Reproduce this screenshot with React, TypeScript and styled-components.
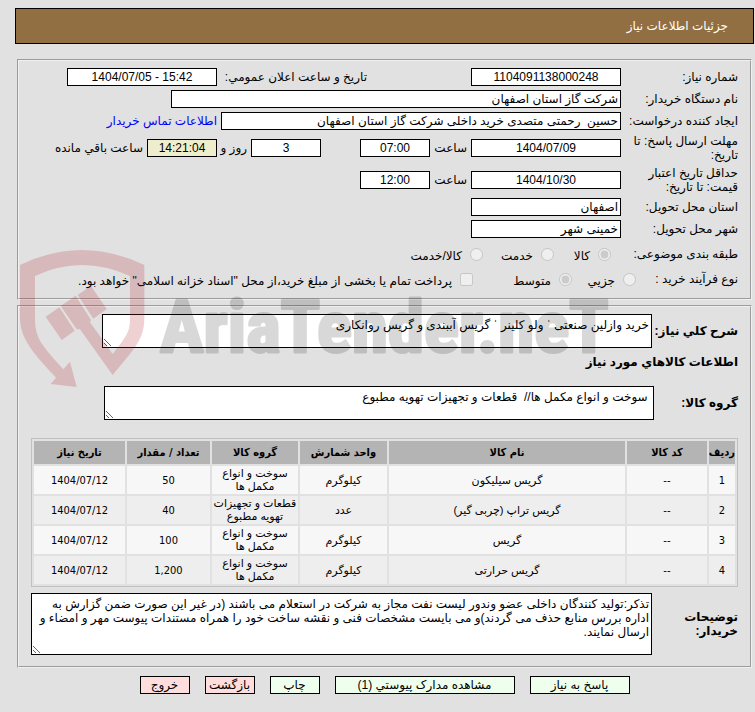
import React from "react";
import styled, { createGlobalStyle, css } from "styled-components";

const GlobalStyle = createGlobalStyle`
  *, *::before, *::after { box-sizing: border-box; }
  body {
    margin: 0;
    background: #e1e1e1;
    color: #000;
    font: 12px/14px "Liberation Sans", "DejaVu Sans", sans-serif;
  }
  input, textarea, button { font: inherit; color: inherit; }
`;

const Page = styled.main`
  position: relative;
  padding: 8px 1px 18px 15px;
`;

const TitleBar = styled.header`
  display: flex;
  align-items: center;
  height: 36px;
  padding: 0 25px;
  border: 1px solid #000;
  background: #916f42;
`;

const Title = styled.h1`
  margin: 0;
  color: #fff;
  font-size: 12px;
  font-weight: normal;
`;

const Panels = styled.div`
  display: flex;
  flex-direction: column;
  gap: 5px;
  padding: 15px 2px 8px;
`;

const Panel = styled.fieldset<{ $pad: string }>`
  min-width: 0;
  margin: 0;
  padding: ${(p) => p.$pad};
  border: 2px groove #f0f0f0;
`;

const Row = styled.div<{ $height?: number }>`
  display: flex;
  align-items: center;
  gap: 4px;
  min-height: ${(p) => p.$height ?? 22}px;
`;

const captionStyle = css<{ $width?: number }>`
  flex: none;
  width: ${(p) => (p.$width ? `${p.$width}px` : "auto")};
`;

const Caption = styled.label<{ $width?: number; $nowrap?: boolean }>`
  ${captionStyle}
  white-space: ${(p) => (p.$nowrap ? "nowrap" : "normal")};
`;

const GroupCaption = styled.span<{ $width?: number }>`
  ${captionStyle}
`;

const Cluster = styled.div<{ $width: number }>`
  display: flex;
  align-items: center;
  gap: 4px;
  flex: none;
  width: ${(p) => p.$width}px;
`;

const Field = styled.input<{ $width: number; $center?: boolean; $accent?: boolean }>`
  width: ${(p) => p.$width}px;
  height: 18px;
  padding: 0 2px;
  border: 1px solid #000;
  border-radius: 0;
  background: ${(p) => (p.$accent ? "#eeeecc" : "#fff")};
  text-align: ${(p) => (p.$center ? "center" : "start")};
`;

const TextLink = styled.a`
  color: #0000ff;
  text-decoration: none;
`;

const Choice = styled.label<{ $width?: number }>`
  display: flex;
  align-items: center;
  gap: 8px;
  flex: none;
  width: ${(p) => (p.$width ? `${p.$width}px` : "auto")};

  input {
    flex: none;
    width: 13px;
    height: 13px;
    margin: 0;
  }

  span {
    padding-top: 3px;
  }
`;

const StrongCaption = styled.label<{ $width: number }>`
  flex: none;
  width: ${(p) => p.$width}px;
  font-weight: bold;
`;

const SectionTitle = styled.h2`
  margin: 7px 0 17px;
  font-size: 12px;
  line-height: 14px;
  font-weight: bold;
`;

const Area = styled.textarea<{ $width: number; $height: number }>`
  display: block;
  width: ${(p) => p.$width}px;
  height: ${(p) => p.$height}px;
  margin: 0;
  padding: 3px 2px;
  border: 1px solid #000;
  border-radius: 0;
  background: #fff;
  overflow: hidden;
`;

const WideArea = styled(Area)`
  flex: 1;
  width: auto;
  min-width: 0;
`;

const AreaRow = styled.div`
  display: flex;
  align-items: center;
`;

const ItemsTable = styled.table`
  width: 100%;
  margin: 18px 0 6px;
  table-layout: fixed;
  border: 1px solid #c0c0c0;
  border-spacing: 2px;
  font-size: 11px;
  line-height: 13px;
  text-align: center;

  th {
    height: 23px;
    padding: 0;
    background: #b4b4b4;
    font-family: "DejaVu Sans Condensed", "DejaVu Sans", sans-serif;
    white-space: nowrap;
  }

  td {
    height: 28px;
    padding: 0;
    background: #f7f7f7;
  }

  tbody tr:nth-child(even) td {
    background: #eee;
  }
`;

const NumberCell = styled.td`
  font-family: "DejaVu Sans Condensed", "DejaVu Sans", sans-serif;
`;

const Col = styled.col<{ $width?: number }>`
  width: ${(p) => (p.$width ? `${p.$width}px` : "auto")};
`;

const Actions = styled.div`
  display: flex;
  justify-content: center;
  gap: 15px;
`;

const ActionButton = styled.button<{ $width: number; $danger?: boolean }>`
  width: ${(p) => p.$width}px;
  height: 18px;
  padding: 0;
  border: 1px solid #000;
  border-radius: 0;
  background: ${(p) => (p.$danger ? "#ffdddd" : "#eeffee")};
  white-space: nowrap;
  cursor: pointer;
`;

const Watermark = styled.svg`
  position: absolute;
  top: 240px;
  left: 10px;
  width: 600px;
  height: 155px;
  direction: ltr;
  pointer-events: none;

  text {
    font: bold 219px "Roboto Condensed", "DejaVu Sans Condensed", sans-serif;
    stroke: #000;
    stroke-width: 9px;
    stroke-linejoin: round;
  }
`;

const items = [
  { name: "گریس سیلیکون", unit: "کیلوگرم", group: "سوخت و انواع مکمل ها", qty: "50" },
  { name: "گریس تراپ (چربی گیر)", unit: "عدد", group: "قطعات و تجهیزات تهویه مطبوع", qty: "40" },
  { name: "گریس", unit: "کیلوگرم", group: "سوخت و انواع مکمل ها", qty: "100" },
  { name: "گریس حرارتی", unit: "کیلوگرم", group: "سوخت و انواع مکمل ها", qty: "1,200" },
];

const headings = ["ردیف", "کد کالا", "نام کالا", "واحد شمارش", "گروه کالا", "تعداد / مقدار", "تاریخ نیاز"];
const columnWidths = [26, 80, undefined, 87, 86, 83, 91];

function GeneralPanel() {
  return (
    <Panel $pad="5px 12px 8px">
      <Row>
        <Caption $width={113} htmlFor="number">شماره نیاز:</Caption>
        <Cluster $width={250}>
          <Field id="number" $width={150} $center readOnly value="1104091138000248" />
        </Cluster>
        <Caption $width={146} htmlFor="announced">تاریخ و ساعت اعلان عمومي:</Caption>
        <Field id="announced" dir="ltr" $width={150} $center readOnly value="1404/07/05 - 15:42" />
      </Row>
      <Row>
        <Caption $width={113} htmlFor="buyer">نام دستگاه خریدار:</Caption>
        <Field id="buyer" $width={450} readOnly value="شرکت گاز استان اصفهان" />
      </Row>
      <Row>
        <Caption $width={113} htmlFor="creator">ایجاد کننده درخواست:</Caption>
        <Field
          id="creator"
          $width={400}
          readOnly
          value="حسین  رحمتی متصدی خرید داخلی شرکت گاز استان اصفهان"
        />
        <TextLink href="#contact">اطلاعات تماس خریدار</TextLink>
      </Row>
      <Row $height={32}>
        <Caption $width={113} htmlFor="deadline">مهلت ارسال پاسخ: تا تاریخ:</Caption>
        <Cluster $width={296}>
          <Field id="deadline" $width={150} $center readOnly value="1404/07/09" />
          <Caption $width={33} htmlFor="deadline-time">ساعت</Caption>
          <Field id="deadline-time" $width={70} $center readOnly value="07:00" />
        </Cluster>
        <Field id="days" $width={70} $center readOnly value="3" />
        <Caption $width={26} $nowrap htmlFor="days">روز و</Caption>
        <Field id="remaining" $width={70} $center $accent readOnly value="14:21:04" />
        <Caption htmlFor="remaining">ساعت باقي مانده</Caption>
      </Row>
      <Row $height={32}>
        <Caption $width={113} htmlFor="validity">حداقل تاریخ اعتبار قیمت: تا تاریخ:</Caption>
        <Field id="validity" $width={150} $center readOnly value="1404/10/30" />
        <Caption $width={33} htmlFor="validity-time">ساعت</Caption>
        <Field id="validity-time" $width={70} $center readOnly value="12:00" />
      </Row>
      <Row>
        <Caption $width={113} htmlFor="province">استان محل تحویل:</Caption>
        <Field id="province" $width={150} readOnly value="اصفهان" />
      </Row>
      <Row>
        <Caption $width={113} htmlFor="city">شهر محل تحویل:</Caption>
        <Field id="city" $width={150} readOnly value="خمینی شهر" />
      </Row>
      <Row $height={28}>
        <GroupCaption $width={123}>طبقه بندی موضوعی:</GroupCaption>
        <Choice $width={53}>
          <input type="radio" name="category" disabled defaultChecked />
          <span>کالا</span>
        </Choice>
        <Choice $width={67}>
          <input type="radio" name="category" disabled />
          <span>خدمت</span>
        </Choice>
        <Choice>
          <input type="radio" name="category" disabled />
          <span>کالا/خدمت</span>
        </Choice>
      </Row>
      <Row $height={22}>
        <GroupCaption $width={98}>نوع فرآیند خرید :</GroupCaption>
        <Choice $width={60}>
          <input type="radio" name="process" disabled />
          <span>جزیي</span>
        </Choice>
        <Choice $width={95}>
          <input type="radio" name="process" disabled defaultChecked />
          <span>متوسط</span>
        </Choice>
        <Choice>
          <input type="checkbox" disabled />
          <span>پرداخت تمام یا بخشی از مبلغ خرید،از محل "اسناد خزانه اسلامی" خواهد بود.</span>
        </Choice>
      </Row>
    </Panel>
  );
}

function ItemsPanel() {
  return (
    <Panel $pad="7px 12px 11px">
      <AreaRow>
        <StrongCaption $width={86} htmlFor="summary">شرح کلي نیاز:</StrongCaption>
        <Area
          id="summary"
          $width={550}
          $height={34}
          readOnly
          value="خرید وازلین صنعتی ˈ ولو کلینر ˈ گریس آببندی و گریس روانکاری"
        />
      </AreaRow>
      <SectionTitle>اطلاعات کالاهاي مورد نیاز</SectionTitle>
      <AreaRow>
        <StrongCaption $width={84} htmlFor="group">گروه کالا:</StrongCaption>
        <Area
          id="group"
          $width={550}
          $height={34}
          readOnly
          value=" سوخت و انواع مکمل ها//  قطعات و تجهیزات تهویه مطبوع"
        />
      </AreaRow>
      <ItemsTable>
        <colgroup>
          {columnWidths.map((width, i) => (
            <Col key={i} $width={width} />
          ))}
        </colgroup>
        <thead>
          <tr>
            {headings.map((heading) => (
              <th key={heading} scope="col">{heading}</th>
            ))}
          </tr>
        </thead>
        <tbody>
          {items.map((item, i) => (
            <tr key={item.name}>
              <NumberCell>{i + 1}</NumberCell>
              <td>--</td>
              <td>{item.name}</td>
              <td>{item.unit}</td>
              <td>{item.group}</td>
              <NumberCell>{item.qty}</NumberCell>
              <NumberCell>1404/07/12</NumberCell>
            </tr>
          ))}
        </tbody>
      </ItemsTable>
      <AreaRow>
        <StrongCaption $width={86} htmlFor="notes">
          توضیحات
          <br />
          خریدار:
        </StrongCaption>
        <WideArea
          id="notes"
          $width={620}
          $height={62}
          readOnly
          value="تذکر:تولید کنندگان داخلی عضو وندور لیست نفت مجاز به شرکت در استعلام می باشند (در غیر این صورت ضمن گزارش به اداره بررس منابع حذف می گردند)و می بایست مشخصات فنی و نقشه ساخت خود را همراه مستندات پیوست مهر و امضاء و ارسال نمایند."
        />
      </AreaRow>
    </Panel>
  );
}

export default function App() {
  return (
    <Page dir="rtl" lang="fa">
      <GlobalStyle />
      <TitleBar>
        <Title>جزئیات اطلاعات نیاز</Title>
      </TitleBar>
      <Panels>
        <GeneralPanel />
        <ItemsPanel />
      </Panels>
      <Actions>
        <ActionButton type="button" $width={100}>پاسخ به نیاز</ActionButton>
        <ActionButton type="button" $width={180}>مشاهده مدارک پیوستي (1)</ActionButton>
        <ActionButton type="button" $width={50}>چاپ</ActionButton>
        <ActionButton type="button" $width={50} $danger>بازگشت</ActionButton>
        <ActionButton type="button" $width={50} $danger>خروج</ActionButton>
      </Actions>
      <Watermark viewBox="0 0 1800 465" aria-hidden="true">
        <g fill="#b41e28" opacity="0.2">
          <path d="M30 75Q215-15 403 75V235C403 300 370 330 308 405L210 268L200 268L152 198L197 167L243 240L240 247L308 342C355 285 360 270 360 235V108Q215 42 75 108V235C75 300 100 320 160 388L180 365L200 441L122 432L138 413C80 350 30 300 30 235Z" />
          <path d="M107 230L148 202L194 272L155 300Z" />
          <path d="M203 165L243 138L290 207L250 236Z" />
        </g>
        <text x="450" y="336" fill="#000" opacity="0.15">AriaTender.neT</text>
      </Watermark>
    </Page>
  );
}
